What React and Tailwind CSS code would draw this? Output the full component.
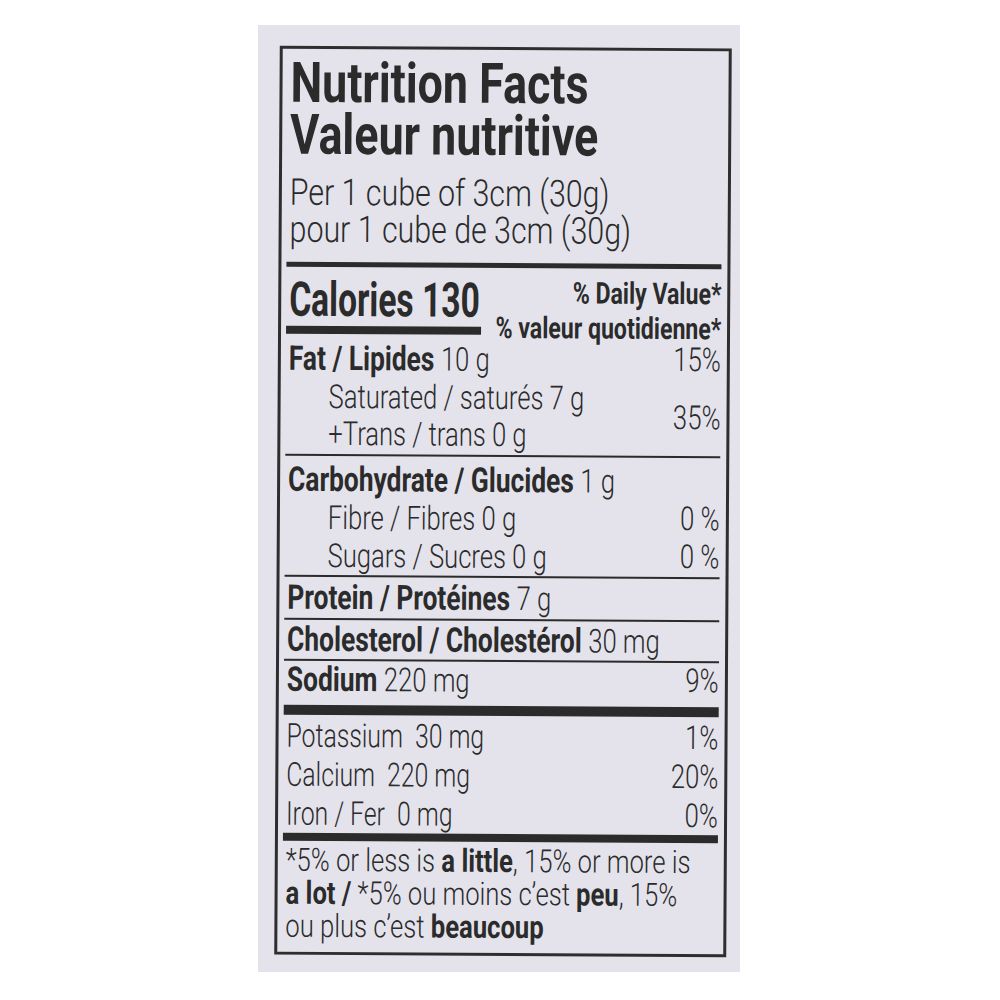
import React from "react";

const font = "font-[family-name:Roboto,'Liberation_Sans',sans-serif]";
const base = "inline-block whitespace-pre origin-left";
const sqTitle = `${base} scale-x-[0.8]`;
const sqPer = `${base} scale-x-[0.82]`;
const sqCal = `${base} scale-x-[0.7]`;
const sqBody = `${base} scale-x-[0.775]`;
const sqMin = `${base} scale-x-[0.75]`;
const sqFoot = `${base} scale-x-[0.8]`;
const sqDv = "inline-block whitespace-pre origin-right scale-x-[0.77]";
const sqPct = "inline-block whitespace-pre origin-right scale-x-[0.78]";

function B({ children }) {
  return <span className="font-bold">{children}</span>;
}

function Row({ h = "h-[38px] leading-[38px]", sq = sqBody, bold, text, pct, indent }) {
  return (
    <div className={`flex items-start ${h} ${indent ? "pl-[43px]" : "pl-[3px]"} text-[34px]`}>
      <div className="flex-1 min-w-0">
        <span className={sq}>
          {bold && <B>{bold}</B>}
          {bold && text ? " " : ""}
          {text && <span className="font-light text-[33px]">{text}</span>}
        </span>
      </div>
      {pct && <span className={`${sqPct} shrink-0 font-light text-[33px]`}>{pct}</span>}
    </div>
  );
}

export default function App() {
  return (
    <div className="min-h-[1000px] bg-white pt-[25px] pl-[258px]">
      <div className={`w-[482px] h-[947px] bg-[#e4e3eb] pt-[22px] pl-[19px] ${font} text-[#2b2b2b]`}>
        <div className="w-[452px] h-[909px] border-[3px] border-[#2e2e2e] rotate-[0.35deg] pl-[5px] pr-[6px] overflow-hidden">
          {/* Title */}
          <div className="mt-[8px] pl-[3px] text-[56px] leading-[52px] font-bold">
            <div><span className={sqTitle}>Nutrition Facts</span></div>
            <div><span className={sqTitle}>Valeur nutritive</span></div>
          </div>
          <div className="mt-[13px] pl-[3px] text-[37px] leading-[37px] font-light">
            <div><span className={sqPer}>Per 1 cube of 3cm (30g)</span></div>
            <div><span className={sqPer}>pour 1 cube de 3cm (30g)</span></div>
          </div>
          <div className="mt-[14px] h-[5px] bg-[#2b2b2b]" />

          {/* Calories */}
          <div className="flex h-[72px]">
            <div className="mt-[11px] w-[195px] shrink-0">
              <div className="pl-[3px] text-[48px] leading-[44px] font-bold">
                <span className={sqCal}>Calories 130</span>
              </div>
              <div className="mt-[4px] h-[8px] bg-[#2b2b2b]" />
            </div>
            <div className="flex-1 min-w-0 flex flex-col items-end pt-[7px] text-[30px] leading-[35px] font-bold">
              <span className={sqDv}>% Daily Value*</span>
              <span className={sqDv}>% valeur quotidienne*</span>
            </div>
          </div>

          {/* Fat */}
          <Row bold="Fat / Lipides" text="10 g" pct="15%" />
          <div className="flex items-center">
            <div className="flex-1 min-w-0">
              <Row indent text="Saturated / saturés 7 g" />
              <Row indent h="h-[37px] leading-[37px]" text="+Trans / trans 0 g" />
            </div>
            <span className={`${sqPct} shrink-0 font-light text-[33px] leading-[38px] mt-[2px]`}>35%</span>
          </div>
          <div className="mt-[2px] h-[2px] bg-[#2b2b2b]" />

          {/* Carbohydrate */}
          <div className="mt-[4px]">
            <Row bold="Carbohydrate / Glucides" text="1 g" />
            <Row indent text="Fibre / Fibres 0 g" pct="0 %" />
            <Row indent text="Sugars / Sucres 0 g" pct="0 %" />
          </div>
          <div className="mt-[1px] h-[2px] bg-[#2b2b2b]" />

          <div className="mt-[1px]">
            <Row bold="Protein / Protéines" text="7 g" />
          </div>
          <div className="mt-[2px] h-[2px] bg-[#2b2b2b]" />
          <Row bold="Cholesterol / Cholestérol" text="30 mg" />
          <div className="mt-[1px] h-[2px] bg-[#2b2b2b]" />
          <Row h="h-[36px] leading-[36px]" bold="Sodium" text="220 mg" pct="9%" />
          <div className="mt-[8px] h-[10px] bg-[#2b2b2b]" />

          {/* Minerals */}
          <div className="mt-[1px]">
            <Row h="h-[39px] leading-[39px]" sq={sqMin} text="Potassium  30 mg" pct="1%" />
            <Row h="h-[39px] leading-[39px]" sq={sqMin} text="Calcium  220 mg" pct="20%" />
            <Row h="h-[39px] leading-[39px]" sq={sqMin} text="Iron / Fer  0 mg" pct="0%" />
          </div>
          <div className="h-[8px] bg-[#2b2b2b]" />

          {/* Footnote */}
          <div className="mt-[3px] pl-[3px] text-[32px] leading-[33px] font-light">
            <div><span className={sqFoot}>*5% or less is <B>a little</B>, 15% or more is</span></div>
            <div><span className={sqFoot}><B>a lot /</B> *5% ou moins c’est <B>peu</B>, 15%</span></div>
            <div><span className={sqFoot}>ou plus c’est <B>beaucoup</B></span></div>
          </div>
        </div>
      </div>
    </div>
  );
}
